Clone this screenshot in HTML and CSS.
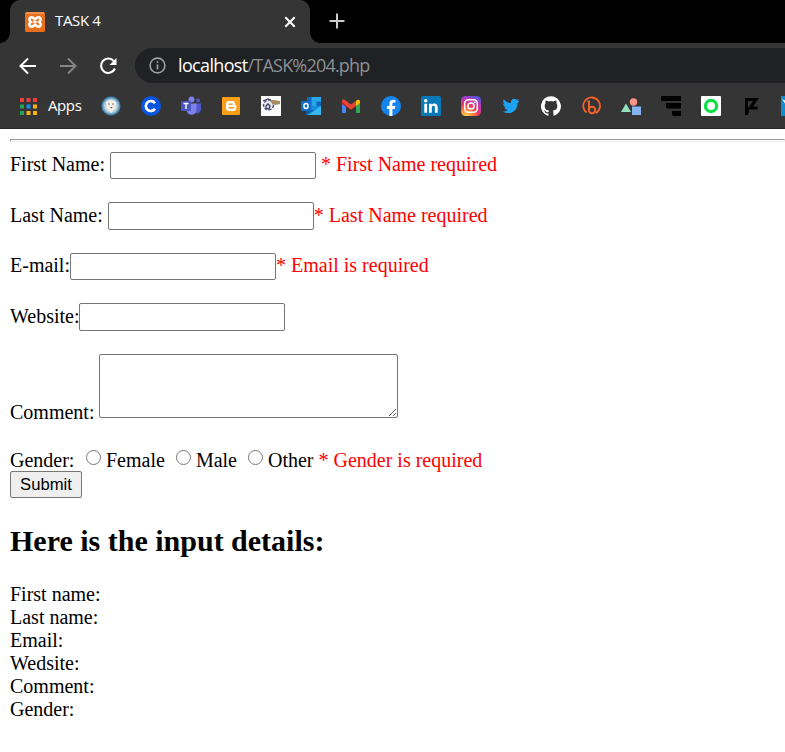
FILE: index.html
```html
<!DOCTYPE html>
<html lang="en">
<head>
<meta charset="utf-8">
<title>TASK 4</title>
<link rel="stylesheet" href="styles.css">
</head>
<body>
<header class="browser">
  <div class="tabs">
    <div class="tab">
      <svg class="favicon" viewBox="0 0 20 20"><rect width="20" height="20" rx="1.500" fill="#e86f1c"/><path d="M1 1h18" stroke="#ffb27c"/><path d="M6.800 5.300c-3 0-3 3.500-1 4.700-2 1.200-2 4.700 1 4.700 1.500 0 2-1.700 3.200-1.700s1.700 1.700 3.200 1.700c3 0 3-3.500 1-4.700 2-1.200 2-4.700-1-4.700-1.500 0-2 1.700-3.200 1.700S8.300 5.300 6.800 5.300z" fill="none" stroke="#fff" stroke-width="2.600"/><path d="M8.500 8.500h3v3h-3z" fill="#fff"/></svg>
      <span class="tab-title">TASK 4</span>
      <svg class="close" viewBox="0 0 12 12"><path d="M1.300 1.300l9.400 9.400M10.700 1.300l-9.400 9.400" stroke="#fff" stroke-width="2"/></svg>
    </div>
    <svg class="plus" viewBox="0 0 16 16"><path d="M8 .5v15M.5 8h15" stroke="#ccc" stroke-width="2"/></svg>
  </div>
  <div class="toolbar">
    <svg class="nav" viewBox="0 0 20 20"><path d="M18 10H3M10 2.500L2.500 10l7.500 7.500" fill="none" stroke="#fff" stroke-width="2"/></svg>
    <svg class="nav" viewBox="0 0 20 20"><path d="M2 10h15M10 2.500l7.500 7.500-7.500 7.500" fill="none" stroke="#858585" stroke-width="2"/></svg>
    <svg class="nav" viewBox="0 0 20 20"><path d="M15.800 5.100A7.200 7.200 0 1 0 16.900 12.500" fill="none" stroke="#fff" stroke-width="2.100"/><path d="M18.500 2v7h-7z" fill="#fff"/></svg>
    <div class="address">
      <svg class="info" viewBox="0 0 17 17"><circle cx="8.500" cy="8.500" r="7.400" fill="none" stroke="#9aa0a6" stroke-width="1.600"/><path d="M8.500 7.500v5M8.500 4.300v1.800" stroke="#9aa0a6" stroke-width="1.700"/></svg>
      <span class="url"><b>localhost</b>/TASK%204.php</span>
    </div>
  </div>
  <nav class="bookmarks">
    <div class="apps">
      <svg class="grid" viewBox="0 0 17 17"><path d="M0 0h4v4H0zM6.500 0h4v4h-4zM13 0h4v4h-4z" fill="#f33e3e"/><path d="M0 6.500h4v4H0zM0 13h4v4H0z" fill="#22a35a"/><path d="M6.500 6.500h4v4h-4z" fill="#1a8cf0"/><path d="M13 6.500h4v4h-4zM6.500 13h4v4h-4zM13 13h4v4h-4z" fill="#fdaf10"/></svg>
      <span>Apps</span>
    </div>
    <svg class="mark" viewBox="0 0 20 20"><defs><radialGradient id="face"><stop offset=".3" stop-color="#eeeae2"/><stop offset=".65" stop-color="#b5d1df"/><stop offset="1" stop-color="#23699a"/></radialGradient></defs><circle cx="10" cy="10" r="9.700" fill="url(#face)"/><path d="M5 6q5-4 10 0l-1 6-4 5-4-5z" fill="#f3eee6"/><circle cx="8" cy="8" r=".8" fill="#5d676f"/><circle cx="12" cy="8" r=".8" fill="#5d676f"/><path d="M9 11h2.500l-1 1.800z" fill="#5d676f"/></svg>
    <svg class="mark" viewBox="0 0 20 20"><circle cx="10" cy="10" r="10" fill="#0955df"/><path d="M14 7.200a5 5 0 1 0 0 5.600" fill="none" stroke="#fff" stroke-width="2.700"/></svg>
    <svg class="mark" viewBox="0 0 20 20"><circle cx="10.500" cy="3.500" r="3" fill="#7b83eb"/><circle cx="17" cy="4.500" r="2" fill="#5059c9"/><path d="M14 7.500h6v6a4 4 0 0 1-5.500 3.500z" fill="#5059c9"/><path d="M6 7.500h9.500V14a5 5 0 0 1-9.500 2z" fill="#7b83eb"/><rect y="5" width="10" height="10" rx="1" fill="#4b53bc"/><path d="M2.500 7.500h5M5 7.500v5.500" stroke="#fff" stroke-width="1.400"/></svg>
    <svg class="mark" viewBox="0 0 20 20"><rect x="1" y="1" width="18" height="18" rx="1" fill="#fc9e18"/><path d="M8 5h3.500Q14 5 14 8q0 1.200 1.300 1.300V12q0 3-3 3H8q-3 0-3-3V8q0-3 3-3z" fill="#fff"/><path d="M8 8.300h3M8 11.800h4.500" stroke="#fc9e18" stroke-width="1.500" stroke-linecap="round"/></svg>
    <svg class="mark" viewBox="0 0 20 20"><path d="M0 0h20v20H0z" fill="#fafafa"/><circle cx="7.500" cy="9" r="5" fill="#e4e3ea" stroke="#55557c" stroke-width="1.500" stroke-dasharray="3 1.500"/><path d="M8 4h5l6 1v3l-5 1-3-2z" fill="#a98c60"/><path d="M2 5l5-2 3 1M5 10l2-2 2 2-1 3-3-1z" stroke="#41416a" stroke-width="1.300" fill="none"/></svg>
    <svg class="mark" viewBox="0 0 20 20"><path d="M6 1h14v9H6z" fill="#0f68be"/><path d="M10.500 1H20v4.500h-4.700V10h-4.800z" fill="#28a8ea"/><path d="M5 10h15v9H5z" fill="#1490df"/><path d="M5 10l8 5-8 4z" fill="#0a5ea8"/><path d="M20 10l-13 9h13z" fill="#35b8f1"/><rect y="5" width="10" height="10" rx="1" fill="#0f6cc9"/><ellipse cx="5" cy="10" rx="2.100" ry="2.500" fill="none" stroke="#fff" stroke-width="1.400"/></svg>
    <svg class="mark" viewBox="0 0 20 20"><path d="M1 5v12h4V8z" fill="#4285f4"/><path d="M15 8v9h4V5z" fill="#34a853"/><path d="M15 5l1-1q3-1 3 1.500V7l-4 3z" fill="#fbbc04"/><path d="M1 7V5.500Q1 2 4 4l6 4.500L15 5v5l-5 3.700L5 10z" fill="#ea4335"/><path d="M1 6l4 3v2L1 8z" fill="#c5221f"/></svg>
    <svg class="mark" viewBox="0 0 20 20"><circle cx="10" cy="10" r="10" fill="#1485ee"/><path d="M8.400 20v-7H6v-3h2.400V8c0-3 1.500-4.300 4-4.300.8 0 1.600.1 2 .2v2.500h-1.300c-1.400 0-1.700.7-1.700 1.700V10h3l-.6 3h-2.400v7z" fill="#fff"/></svg>
    <svg class="mark" viewBox="0 0 20 20"><rect width="20" height="20" rx="1.500" fill="#0878b6"/><path d="M3.300 7.700h2.800v9H3.300zM8 7.700h2.700v1.200c1.500-2.300 6-2 6 2.400v5.400h-2.800v-5c0-2.700-3.100-2.400-3.100 0v5H8z" fill="#fff"/><circle cx="4.700" cy="4.700" r="1.700" fill="#fff"/></svg>
    <svg class="mark" viewBox="0 0 20 20"><defs><radialGradient id="insta" cx=".25" cy="1.050" r="1.150"><stop offset="0" stop-color="#ffdd55"/><stop offset=".3" stop-color="#ff8a3d"/><stop offset=".55" stop-color="#e83a66"/><stop offset=".78" stop-color="#be36b7"/><stop offset="1" stop-color="#5553d8"/></radialGradient></defs><rect width="20" height="20" rx="4.500" fill="url(#insta)"/><rect x="3.700" y="3.700" width="12.600" height="12.600" rx="3.700" fill="none" stroke="#fff" stroke-width="1.500"/><circle cx="10" cy="10" r="3.100" fill="none" stroke="#fff" stroke-width="1.500"/><circle cx="13.700" cy="6.300" r=".9" fill="#fff"/></svg>
    <svg class="mark" viewBox="0 0 20 20"><path d="M18.500 5.300l-2 2c.2 5.800-4 9.700-9 9.700-2.200 0-4.200-.6-5.700-1.600 2 .1 3.700-.5 5-1.500-1.700-.1-2.900-1.100-3.300-2.500h1.500C3.300 11 2.200 9.500 2.200 7.800l1.500.4C2.200 7 1.800 5 2.700 3.300c1.900 2.200 4.300 3.500 7.200 3.700C9.200 3 13.500 1.300 15.700 3.900L18 3l-1.400 2z" fill="#1da1f2"/></svg>
    <svg class="mark" viewBox="0 0 24 24"><path d="M12 .3a12 12 0 0 0-3.800 23.400c.6.1.8-.3.800-.6v-2.200c-3.300.7-4-1.400-4-1.400-.6-1.400-1.400-1.800-1.400-1.800-1-.7.100-.7.100-.7 1.200.1 1.900 1.200 1.900 1.200 1 1.800 2.800 1.300 3.500 1 .1-.8.400-1.300.8-1.600-2.700-.3-5.500-1.300-5.500-5.900 0-1.300.5-2.400 1.200-3.200-.1-.3-.5-1.500.1-3.200 0 0 1-.3 3.300 1.200a11.500 11.500 0 0 1 6 0c2.300-1.500 3.300-1.200 3.300-1.200.7 1.700.3 2.900.1 3.200.8.800 1.200 1.900 1.200 3.200 0 4.600-2.800 5.600-5.500 5.900.4.400.8 1.100.8 2.200v3.300c0 .3.200.7.800.6A12 12 0 0 0 12 .3z" fill="#fff"/></svg>
    <svg class="mark" viewBox="0 0 20 20"><path d="M5.500 16.500A8.400 8.400 0 1 1 14.500 17.300" fill="none" stroke="#f26128" stroke-width="1.800"/><path d="M6.500 5.500H8V14.500" fill="none" stroke="#f26128" stroke-width="2"/><circle cx="11" cy="14" r="3.200" fill="none" stroke="#f26128" stroke-width="2"/></svg>
    <svg class="mark" viewBox="0 0 20 20"><circle cx="12.500" cy="6" r="3.700" fill="#fa9484"/><path d="M5 7.500L10 16H0z" fill="#95dfbd"/><path d="M11 10.500h9v8.500h-9z" fill="#83b4ef"/></svg>
    <svg class="mark" viewBox="0 0 20 20"><path d="M0 0h20v5H1Q0 5 0 4zM5 7h15v5.500H7Q5 12.500 5 11zM11 15h9v5h-7q-2 0-2-2z" fill="#000"/></svg>
    <svg class="mark" viewBox="0 0 20 20"><rect width="20" height="20" rx="1" fill="#fff"/><circle cx="10" cy="10" r="5.600" fill="none" stroke="#08e044" stroke-width="3.200"/></svg>
    <svg class="mark" viewBox="0 0 20 20"><path d="M5.500 19V3.500H15L9 12H16.500M5.500 15.500H8" fill="none" stroke="#000" stroke-width="3"/></svg>
    <svg class="mark" viewBox="0 0 20 20"><path d="M0 0h20v20H0z" fill="#118dcc"/><path d="M1 3l6 3 5-2v2L5 9z" fill="#fff"/></svg>
  </nav>
</header>
<main class="page">
  <hr class="rule">
  <form>
    <div class="field first"><label for="fn">First Name:&nbsp;</label><input class="entry" id="fn" type="text"><span class="error">&nbsp;* First Name required</span></div>
    <div class="field last"><label for="ln">Last Name:&nbsp;</label><input class="entry" id="ln" type="text"><span class="error">* Last Name required</span></div>
    <div class="field email"><label for="em">E-mail:</label><input class="entry" id="em" type="text"><span class="error">* Email is required</span></div>
    <div class="field site"><label for="ws">Website:</label><input class="entry" id="ws" type="text"></div>
    <div class="field comment"><label for="cm">Comment:&nbsp;</label><textarea id="cm"></textarea></div>
    <div class="field gender"><span class="caption">Gender:</span>
      <label class="choice"><input type="radio" name="g">Female</label>
      <label class="choice"><input type="radio" name="g">Male</label>
      <label class="choice"><input type="radio" name="g">Other</label>
      <span class="error">&nbsp;* Gender is required</span></div>
    <button class="submit" type="button">Submit</button>
  </form>
  <h2>Here is the input details:</h2>
  <div class="details">First name:<br>Last name:<br>Email:<br>Wedsite:<br>Comment:<br>Gender:</div>
</main>
</body>
</html>
```
FILE: styles.css
```css
* { box-sizing: border-box; }
body { margin: 0; height: 752px; overflow: hidden; background: #fff; color: #000; font: 20px/23px "Liberation Serif", serif; }
svg { display: block; flex: none; }

.browser { height: 129px; background: #353535; overflow: hidden; border-bottom: 1px solid #252525; font-family: "Open Sans", sans-serif; }
.tabs { display: flex; height: 43px; background: #000; }
.tab { position: relative; display: flex; align-items: center; width: 300px; margin-left: 10px; padding: 0 14px 0 15px; background: #353535; border-radius: 10px 10px 0 0; }
.tab::before, .tab::after { content: ""; position: absolute; bottom: 0; width: 10px; height: 10px; }
.tab::before { left: -10px; background: radial-gradient(circle at 0 0, #000 9.5px, #353535 10px); }
.tab::after { right: -10px; background: radial-gradient(circle at 100% 0, #000 9.5px, #353535 10px); }
.favicon { width: 20px; height: 20px; }
.tab-title { margin: -2px 0 0 10px; color: #fff; font-size: 15px; letter-spacing: -0.35px; }
.close { width: 12px; height: 12px; margin-left: auto; }
.plus { width: 16px; height: 16px; margin: 13px 0 0 19px; }
.toolbar { display: flex; align-items: center; height: 45px; padding-left: 18px; }
.nav { width: 20px; height: 20px; margin-right: 20px; }
.address { display: flex; flex: 1; align-items: center; height: 35px; padding-left: 14px; margin-left: -3px; background: #202124; border-radius: 18px 0 0 18px; }
.info { width: 17px; height: 17px; }
.url { margin-left: 12px; color: #8c9093; font-size: 18px; letter-spacing: -0.8px; white-space: nowrap; }
.url b { color: #fff; font-weight: 400; letter-spacing: -0.65px; }
.bookmarks { display: flex; height: 36px; align-items: center; padding-left: 20px; }
.apps { display: flex; flex: none; width: 81px; align-items: center; color: #fff; font-size: 15px; letter-spacing: -0.4px; }
.apps span { margin-top: -1px; }
.grid { width: 17px; height: 17px; margin-right: 11px; }
.mark { width: 20px; height: 20px; margin-right: 20px; }

.page { padding: 10px 0 0 10px; }
.rule { height: 3px; margin: 0 0 10px; border: 1px solid; border-color: #9a9a9a #eee #eee #9a9a9a; }
.field { display: flex; align-items: flex-start; white-space: pre; }
.field > label, .error { margin-top: 1px; }
.first { height: 50px; }
.last { height: 51px; }
.email { height: 50px; }
.site { height: 51px; }
.last label, .last .error, .site label { margin-top: 2px; }
.error { color: #f00; }
.entry { width: 206px; height: 28px; padding: 1px 2px; border: 1px solid #767676; border-radius: 2px; background: #fff; font: 16.667px "Liberation Sans", sans-serif; }
.first .entry, .email .entry { height: 27px; }
.comment { height: 94px; }
.comment label { margin-top: 47px; }
textarea { width: 299px; height: 64px; margin: 0; border: 1px solid #767676; border-radius: 2px; }
.gender { height: 23px; white-space: nowrap; }
.caption { width: 76px; margin-top: 1px; }
.choice { display: flex; margin-right: 12px; }
.choice:nth-of-type(3) { margin-right: 1px; }
.choice input { width: 15px; height: 15px; margin: 1px 5px 0 0; }
.choice:nth-of-type(n+2) input { margin-left: -1px; }
.choice:nth-of-type(3) + .error { margin-left: -1px; }
.submit { display: block; width: 72px; height: 27px; padding: 0; border: 1px solid #767676; border-radius: 2px; background: #efefef; color: #000; font: 16.667px/24px "Liberation Sans", sans-serif; }
h2 { margin: 26px 0 25px; font-size: 30px; line-height: 34px; }
```
